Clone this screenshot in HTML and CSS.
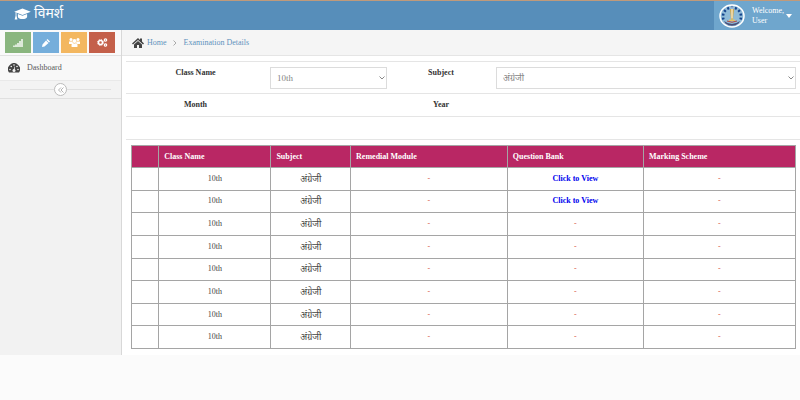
FILE: index.html
```html
<!DOCTYPE html>
<html lang="hi">
<head>
    <meta charset="UTF-8">
    <title>विमर्श</title>
    <link rel="stylesheet" href="styles.css">
</head>
<body>
<header class="navbar">
    <a class="brand" href="#">
        <svg viewBox="0 0 36 26" width="17" height="12" fill="#fff">
            <path d="M18 1 36 8 18 15 0 8z"/>
            <path d="M8 13v6c0 3 5 5 10 5s10-2 10-5v-6l-10 4z"/>
            <path d="M3 9h2v8l2 8H1l2-8z"/>
        </svg>
        <span>विमर्श</span>
    </a>
    <button class="user" type="button">
        <svg class="avatar" viewBox="0 0 52 48" width="26" height="24">
            <ellipse cx="26" cy="24" rx="24" ry="22" fill="#8fbbd8" stroke="#fff" stroke-width="3"/>
            <path d="M9 31a18 18 0 1 1 34 0" fill="none" stroke="#17458d" stroke-width="5" stroke-dasharray="4 4"/>
            <path d="M10 34q16 12 32 0l-3 5q-13 9-26 0z" fill="#4a4f78"/>
            <path d="M16 34q10 5 20 0" fill="none" stroke="#b4483f" stroke-width="2"/>
            <path d="M22 10h8l-2 21h-4z" fill="#d9a83e"/>
            <path d="M26 5v24" stroke="#fff" stroke-width="2"/>
            <path d="M20 31h12v3H20z" fill="#e5c262"/>
        </svg>
        <span class="user-info">Welcome,<br>User</span>
        <svg viewBox="0 0 6 4" width="6" height="4" fill="#fff"><path d="M0 0h6L3 4z"/></svg>
    </button>
</header>

<div class="main">
    <aside class="sidebar">
        <div class="shortcuts">
            <button class="btn green" type="button" aria-label="Statistics">
                <svg viewBox="0 0 20 16" width="10" height="8" fill="#fff" fill-opacity=".7">
                    <path d="M0 13h4v3H0zM4 11h4v5H4zM8 8h4v8H8zM12 4h4v12h-4zM16 0h4v16h-4z"/>
                </svg>
            </button>
            <button class="btn blue" type="button" aria-label="Edit">
                <svg viewBox="0 0 16 16" width="8" height="8" fill="#fff">
                    <path d="m11 0 5 5-2 2-5-5zM8 3l5 5-8 7-5 1 1-5z"/>
                </svg>
            </button>
            <button class="btn orange" type="button" aria-label="Users">
                <svg viewBox="0 0 22 18" width="11" height="9" fill="#fff">
                    <circle cx="4" cy="3" r="3"/>
                    <circle cx="18" cy="3" r="3"/>
                    <circle cx="11" cy="6" r="4"/>
                    <path d="M0 7h7l1 4-3 1H0zM22 7h-7l-1 4 3 1h5zM5 17v-3q0-4 3-4 3 2 6 0 3 0 3 4v3q0 1-2 1H7q-2 0-2-1z"/>
                </svg>
            </button>
            <button class="btn red" type="button" aria-label="Settings">
                <svg viewBox="0 0 22 18" width="11" height="9" fill="none" stroke="#fff">
                    <circle cx="7" cy="9" r="4" stroke-width="3"/>
                    <circle cx="7" cy="9" r="6" stroke-width="2" stroke-dasharray="2.4 2.3"/>
                    <circle cx="17" cy="4" r="2.4" stroke-width="2.4"/>
                    <circle cx="17" cy="14" r="2.4" stroke-width="2.4"/>
                </svg>
            </button>
        </div>
        <a class="menu-item" href="#">
            <svg viewBox="0 0 24 20" width="12" height="10">
                <path d="M2 19a12 12 0 1 1 20 0z" fill="#444"/>
                <g fill="#f2f2f2">
                    <circle cx="4" cy="13" r="1.6"/>
                    <circle cx="6.5" cy="7" r="1.6"/>
                    <circle cx="12" cy="4" r="1.6"/>
                    <circle cx="18" cy="7" r="1.6"/>
                    <circle cx="20" cy="13" r="1.6"/>
                    <circle cx="12" cy="15" r="3"/>
                    <path d="m11 14 2-7 1 .3-1 7z"/>
                </g>
            </svg>
            <span>Dashboard</span>
        </a>
        <div class="toggle">
            <button type="button" aria-label="Collapse menu">
                <svg viewBox="0 0 12 12" width="6" height="6" fill="none" stroke="#999" stroke-width="1.5">
                    <path d="M6 1 1 6l5 5M11 1 6 6l5 5"/>
                </svg>
            </button>
        </div>
    </aside>

    <main class="content">
        <nav class="breadcrumb">
            <svg viewBox="0 0 24 20" width="12" height="10" fill="#444">
                <path d="m12 0 4 4V1h4v6l4 4-2 2L12 4 2 13l-2-2z"/>
                <path d="m12 6 8 7v7h-6v-6h-4v6H4v-7z"/>
            </svg>
            <a href="#">Home</a>
            <svg class="sep" viewBox="0 0 4 6" width="4" height="6" fill="none" stroke="#aaa"><path d="M.5.5 3 3 .5 5.5"/></svg>
            <a href="#">Examination Details</a>
        </nav>

        <form class="filters">
            <div class="row fields">
                <label for="class">Class Name</label>
                <div class="select">
                    <select id="class">
                        <option>10th</option>
                    </select>
                    <svg viewBox="0 0 6 4" width="6" height="4" fill="none" stroke="#888"><path d="M.5.5 3 3 5.5.5"/></svg>
                </div>
                <label for="subject">Subject</label>
                <div class="select">
                    <select id="subject">
                        <option>अंग्रेजी</option>
                    </select>
                    <svg viewBox="0 0 6 4" width="6" height="4" fill="none" stroke="#888"><path d="M.5.5 3 3 5.5.5"/></svg>
                </div>
            </div>
            <div class="row">
                <b>Month</b>
                <span></span>
                <b>Year</b>
            </div>
            <div class="row"></div>
        </form>

        <table class="grid">
            <colgroup>
                <col class="c-no">
                <col class="c-class">
                <col class="c-subject">
                <col class="c-module">
                <col class="c-bank">
                <col>
            </colgroup>
            <thead>
            <tr>
                <th></th>
                <th>Class Name</th>
                <th>Subject</th>
                <th>Remedial Module</th>
                <th>Question Bank</th>
                <th>Marking Scheme</th>
            </tr>
            </thead>
            <tbody>
            <tr><td></td><td>10th</td><td class="hindi">अंग्रेजी</td><td class="none">-</td><td><a href="#">Click to View</a></td><td class="none">-</td></tr>
            <tr><td></td><td>10th</td><td class="hindi">अंग्रेजी</td><td class="none">-</td><td><a href="#">Click to View</a></td><td class="none">-</td></tr>
            <tr><td></td><td>10th</td><td class="hindi">अंग्रेजी</td><td class="none">-</td><td class="none">-</td><td class="none">-</td></tr>
            <tr><td></td><td>10th</td><td class="hindi">अंग्रेजी</td><td class="none">-</td><td class="none">-</td><td class="none">-</td></tr>
            <tr><td></td><td>10th</td><td class="hindi">अंग्रेजी</td><td class="none">-</td><td class="none">-</td><td class="none">-</td></tr>
            <tr><td></td><td>10th</td><td class="hindi">अंग्रेजी</td><td class="none">-</td><td class="none">-</td><td class="none">-</td></tr>
            <tr><td></td><td>10th</td><td class="hindi">अंग्रेजी</td><td class="none">-</td><td class="none">-</td><td class="none">-</td></tr>
            <tr><td></td><td>10th</td><td class="hindi">अंग्रेजी</td><td class="none">-</td><td class="none">-</td><td class="none">-</td></tr>
            </tbody>
        </table>
    </main>
</div>
</body>
</html>
```
FILE: styles.css
```css
* {
    box-sizing: border-box;
}

body {
    margin: 0;
    background: #fbfbfb;
    color: #444;
    font-family: "Liberation Serif", "Noto Sans", serif;
    font-size: 8px;
    line-height: 10px;
}

a {
    text-decoration: none;
}

button, select {
    font: inherit;
}

svg {
    display: block;
    flex: none;
}

.navbar {
    display: flex;
    justify-content: space-between;
    height: 30px;
    border-top: 1px solid #c09a7b;
    background: #578eba;
}

.brand {
    display: flex;
    align-items: center;
    gap: 3px;
    padding: 0 0 4px 14px;
    color: #fff;
    font-size: 14px;
    line-height: 24px;
}

.user {
    display: flex;
    align-items: center;
    gap: 7px;
    padding: 0 8px 0 5px;
    border: 0;
    background: #6fa6cd;
    color: #fff;
    text-align: left;
}

.user-info {
    width: 27px;
}

.main {
    display: flex;
}

.sidebar {
    width: 122px;
    border-right: 1px solid #d8d8d8;
    background: #f2f2f2;
}

.shortcuts {
    display: flex;
    gap: 2px;
    padding: 2px 5px;
    height: 26px;
    border-bottom: 1px solid #e2e2e2;
    background: #fafafa;
}

.btn {
    display: flex;
    flex: 0 0 26px;
    align-items: center;
    justify-content: center;
    height: 21px;
    padding: 0;
    border: 0;
}

.green {
    background: #8ab67f;
}

.blue {
    background: #75aedb;
}

.orange {
    background: #f3b760;
}

.red {
    background: #c4604a;
}

.menu-item {
    display: flex;
    align-items: center;
    gap: 7px;
    height: 25px;
    padding-left: 8px;
    border-bottom: 1px solid #e9e9e9;
    background: #f8f8f8;
    color: #585858;
}

.toggle {
    display: flex;
    align-items: center;
    height: 18px;
    padding: 0 10px;
    border-bottom: 1px solid #e0e0e0;
    background: #f3f3f3;
}

.toggle::before, .toggle::after {
    content: "";
    flex: 1;
    border-top: 1px solid #e0e0e0;
}

.toggle button {
    display: flex;
    align-items: center;
    justify-content: center;
    width: 13px;
    height: 13px;
    padding: 0;
    border: 1px solid #bbb;
    border-radius: 50%;
    background: #fff;
}

.content {
    flex: 1;
    padding-bottom: 6px;
    background: #fff;
}

.breadcrumb {
    display: flex;
    align-items: center;
    gap: 3px;
    height: 26px;
    padding-left: 10px;
    border-bottom: 1px solid #e5e5e5;
    background: #f5f5f5;
}

.breadcrumb a {
    color: #5f93bd;
}

.sep {
    margin: 0 4px 0 3px;
}

.filters {
    margin: 5px 0 5px 4px;
    border-top: 1px solid #e5e5e5;
}

.row {
    display: grid;
    grid-template-columns: 139fr 126fr 100fr 309fr;
    align-items: center;
    height: 23px;
    border-bottom: 1px solid #e5e5e5;
    color: #333;
    text-align: center;
}

.fields {
    height: 32px;
}

.fields label {
    align-self: start;
    padding-top: 6px;
    font-weight: bold;
}

.select {
    position: relative;
    margin: 0 4px 0 5px;
}

.select select {
    display: block;
    width: 100%;
    height: 22px;
    padding: 0 6px;
    appearance: none;
    border: 1px solid #dcdcdc;
    border-radius: 0;
    background: #fff;
    color: #858585;
    font-size: 9px;
}

.select svg {
    position: absolute;
    top: 9px;
    right: 2px;
    pointer-events: none;
}

.grid {
    width: calc(100% - 13px);
    height: 204px;
    margin-left: 9px;
    border-collapse: collapse;
    table-layout: fixed;
}

.grid th, .grid td {
    padding: 0 5px;
    border: 1px solid #a5a5a5;
    text-align: center;
}

.grid th {
    height: 22px;
    background: #b92764;
    color: #fff;
    text-align: left;
}

.grid a {
    color: #0000ee;
    font-weight: bold;
}

.grid .hindi {
    font-size: 9px;
}

.grid .none {
    color: #d9604c;
}

.c-no {
    width: 4.1%;
}

.c-class {
    width: 16.9%;
}

.c-subject {
    width: 12%;
}

.c-module {
    width: 23.6%;
}

.c-bank {
    width: 20.5%;
}
```
